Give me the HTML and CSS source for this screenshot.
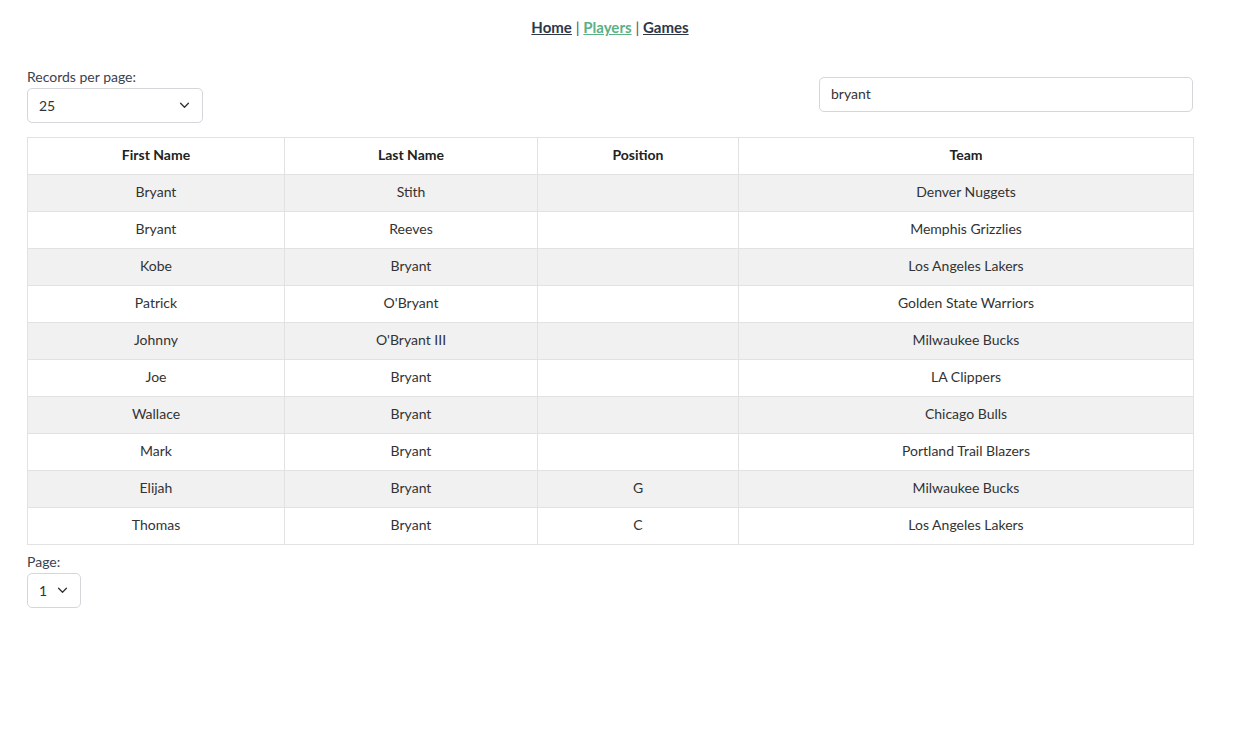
FILE: index.html
```html
<!DOCTYPE html>
<html>
<head>
<meta charset="utf-8">
<link rel="stylesheet" href="styles.css">
</head>
<body>
<nav class="nav">
  <a href="#" class="nav-link">Home</a> | <a href="#" class="nav-link active">Players</a> | <a href="#" class="nav-link">Games</a>
</nav>
<main class="container">
  <div class="controls">
    <div class="field">
      <label class="label">Records per page:</label>
      <div class="select wide"><span>25</span><svg class="chev" viewBox="0 0 12 8" width="11" height="7"><path d="M1.5 1.5 L6 6 L10.5 1.5" fill="none" stroke="#333" stroke-width="1.5" stroke-linecap="round" stroke-linejoin="round"/></svg></div>
    </div>
    <div class="search">bryant</div>
  </div>
  <table class="table">
    <colgroup><col class="c1"><col class="c2"><col class="c3"><col class="c4"></colgroup>
    <thead>
      <tr><th>First Name</th><th>Last Name</th><th>Position</th><th>Team</th></tr>
    </thead>
    <tbody>
      <tr><td>Bryant</td><td>Stith</td><td></td><td>Denver Nuggets</td></tr>
      <tr><td>Bryant</td><td>Reeves</td><td></td><td>Memphis Grizzlies</td></tr>
      <tr><td>Kobe</td><td>Bryant</td><td></td><td>Los Angeles Lakers</td></tr>
      <tr><td>Patrick</td><td>O'Bryant</td><td></td><td>Golden State Warriors</td></tr>
      <tr><td>Johnny</td><td>O'Bryant III</td><td></td><td>Milwaukee Bucks</td></tr>
      <tr><td>Joe</td><td>Bryant</td><td></td><td>LA Clippers</td></tr>
      <tr><td>Wallace</td><td>Bryant</td><td></td><td>Chicago Bulls</td></tr>
      <tr><td>Mark</td><td>Bryant</td><td></td><td>Portland Trail Blazers</td></tr>
      <tr><td>Elijah</td><td>Bryant</td><td>G</td><td>Milwaukee Bucks</td></tr>
      <tr><td>Thomas</td><td>Bryant</td><td>C</td><td>Los Angeles Lakers</td></tr>
    </tbody>
  </table>
  <div class="field pager">
    <label class="label">Page:</label>
    <div class="select narrow"><span>1</span><svg class="chev" viewBox="0 0 12 8" width="11" height="7"><path d="M1.5 1.5 L6 6 L10.5 1.5" fill="none" stroke="#333" stroke-width="1.5" stroke-linecap="round" stroke-linejoin="round"/></svg></div>
  </div>
</main>
</body>
</html>
```
FILE: styles.css
```css
* { box-sizing: border-box; }
body {
  margin: 0;
  font-family: Lato, "Noto Sans", sans-serif;
  font-size: 14px;
  color: #333;
  background: #fff;
}
.nav {
  width: 1220px;
  text-align: center;
  padding-top: 18px;
  height: 67px;
  font-size: 15px;
  color: #4a5568;
}
.nav-link {
  color: #2d3748;
  font-weight: 700;
  text-decoration: underline;
}
.nav-link.active { color: #5cb083; }
.container {
  width: 1166px;
  margin-left: 27px;
}
.controls {
  display: flex;
  justify-content: space-between;
  align-items: flex-start;
  margin-bottom: 14px;
}
.field { display: flex; flex-direction: column; }
.label {
  color: #3a4252;
  line-height: 19px;
  height: 21px;
}
.select {
  height: 35px;
  border: 1px solid #d4d6da;
  border-radius: 5px;
  display: flex;
  align-items: center;
  justify-content: space-between;
  padding: 0 12px 0 11px;
  color: #333;
}
.wide { width: 176px; }
.narrow { width: 54px; }
.chev { display: block; }
.search {
  margin-top: 10px;
  width: 374px;
  height: 35px;
  border: 1px solid #d4d6da;
  border-radius: 5px;
  padding: 0 11px;
  line-height: 31px;
  color: #333;
}
.table {
  width: 1166px;
  border-collapse: collapse;
  table-layout: fixed;
  border: 1px solid #e2e2e2;
}
.c1 { width: 257px; }
.c2 { width: 253px; }
.c3 { width: 201px; }
.c4 { width: 455px; }
th, td {
  height: 37px;
  padding: 0 8px 3px;
  text-align: center;
  border: 1px solid #e2e2e2;
}
th { font-weight: 700; color: #222; }
tbody tr:nth-child(odd) td { background: #f1f1f1; }
.pager { margin-top: 7px; }
```
